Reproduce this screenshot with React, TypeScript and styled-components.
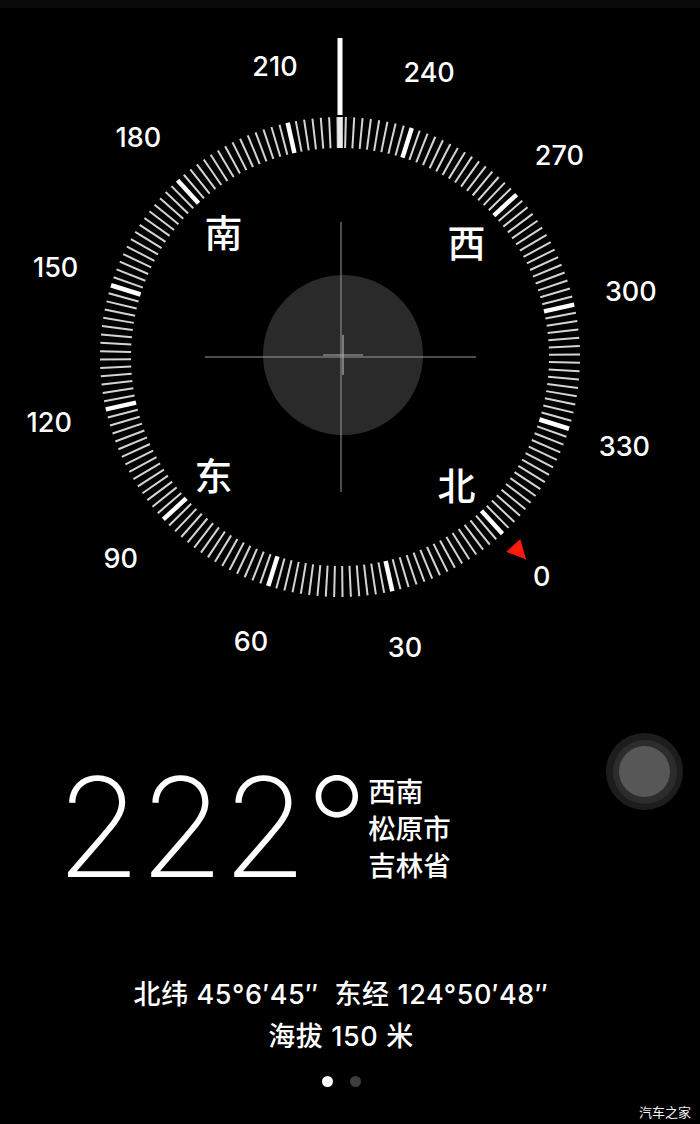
import React from 'react';
import styled, { createGlobalStyle } from 'styled-components';

const GlobalStyle = createGlobalStyle`
  html, body {
    margin: 0;
    padding: 0;
    background: #000;
  }
  * {
    box-sizing: border-box;
  }
`;

const CX = 340;
const CY = 357;
const HEADING = 222.6;

const Screen = styled.div`
  position: relative;
  width: 700px;
  height: 1124px;
  overflow: hidden;
  background: #000;
  color: #fff;
  display: flex;
  flex-direction: column;
  font-family: Inter, 'Noto Sans CJK SC', sans-serif;
`;

const TopStrip = styled.div`
  height: 8px;
  background: #090909;
`;

const DialSvg = styled.svg`
  display: block;
  width: 700px;
  height: 680px;
`;

const DialNumber = styled.text`
  font-family: Inter, 'Noto Sans CJK SC', sans-serif;
  font-size: 27px;
  font-weight: 500;
  fill: #fff;
  text-anchor: middle;
  dominant-baseline: central;
`;

const Cardinal = styled.text`
  font-family: 'Noto Sans CJK SC', sans-serif;
  font-size: 38px;
  font-weight: 500;
  fill: #fff;
  text-anchor: middle;
  dominant-baseline: central;
`;

const ReadingRow = styled.div`
  display: flex;
  align-items: flex-start;
  margin-top: 70px;
  padding-left: 56px;
`;

const Degrees = styled.div`
  font-family: Inter, sans-serif;
  font-size: 138px;
  font-weight: 200;
  line-height: 138px;
  letter-spacing: -2px;
`;

const Place = styled.div`
  display: flex;
  flex-direction: column;
  margin-left: 2px;
  margin-top: 14px;
  font-family: 'Noto Sans CJK SC', sans-serif;
  font-size: 27.5px;
  font-weight: 500;
  line-height: 37px;
`;

const Coords = styled.div`
  margin-top: 78px;
  display: flex;
  flex-direction: column;
  align-items: center;
  font-family: Inter, 'Noto Sans CJK SC', sans-serif;
  font-size: 27px;
  font-weight: 500;
  line-height: 42px;
  letter-spacing: 0.6px;
  padding-right: 18px;
`;

const Pager = styled.div`
  display: flex;
  justify-content: center;
  gap: 17px;
  margin-top: 18px;
  padding-right: 18px;
`;

const Dot = styled.span<{ $active?: boolean }>`
  width: 11px;
  height: 11px;
  border-radius: 50%;
  background: ${(p) => (p.$active ? '#fff' : '#3d3d3d')};
`;

const TouchButton = styled.div`
  position: absolute;
  left: 606px;
  top: 733px;
  width: 77px;
  height: 77px;
  border-radius: 50%;
  background: #1d1d1d;
  display: flex;
  align-items: center;
  justify-content: center;
`;

const TouchRing = styled.div`
  width: 64px;
  height: 64px;
  border-radius: 50%;
  background: #2c2c2c;
  display: flex;
  align-items: center;
  justify-content: center;
`;

const TouchCore = styled.div`
  width: 51px;
  height: 51px;
  border-radius: 50%;
  background: #575757;
`;

const Watermark = styled.div`
  position: absolute;
  right: 9px;
  bottom: 3px;
  font-family: 'Noto Sans CJK SC', sans-serif;
  font-size: 13px;
  color: #f2f2f2;
`;

function polar(r: number, deg: number) {
  const a = ((deg - HEADING) * Math.PI) / 180;
  return [CX + r * Math.sin(a), CY - r * Math.cos(a)];
}

const ticks = Array.from({ length: 180 }, (_, i) => i * 2);
const labels = [0, 30, 60, 90, 120, 150, 180, 210, 240, 270, 300, 330];
const cardinals = [
  { deg: 0, name: '北' },
  { deg: 90, name: '东' },
  { deg: 180, name: '南' },
  { deg: 270, name: '西' },
];

function northMarker() {
  const a = ((0 - HEADING) * Math.PI) / 180;
  const ux = Math.sin(a);
  const uy = -Math.cos(a);
  const px = -uy;
  const py = ux;
  const bx = CX + 256 * ux;
  const by = CY + 256 * uy;
  const tx = CX + 275 * ux;
  const ty = CY + 275 * uy;
  const w = 9.5;
  return `${bx + px * w},${by + py * w} ${bx - px * w},${by - py * w} ${tx},${ty}`;
}

function Dial() {
  return (
    <DialSvg viewBox="0 8 700 680">
      {ticks.map((d) => {
        const major = d % 30 === 0;
        const [x1, y1] = polar(209, d);
        const [x2, y2] = polar(240, d);
        return (
          <line
            key={d}
            x1={x1}
            y1={y1}
            x2={x2}
            y2={y2}
            stroke={major ? '#fff' : '#d4d4d4'}
            strokeWidth={major ? 4.5 : 2}
          />
        );
      })}
      <rect x={337.5} y={38} width={5} height={77} fill="#fff" />
      <rect x={337.8} y={117} width={5} height={31} fill="#ececec" />
      {labels.map((d) => {
        const [x, y] = polar(298, d);
        return (
          <DialNumber key={d} x={x} y={y}>
            {d}
          </DialNumber>
        );
      })}
      {cardinals.map((c) => {
        const [x, y] = polar(172, c.deg);
        return (
          <Cardinal key={c.name} x={x} y={y}>
            {c.name}
          </Cardinal>
        );
      })}
      <polygon points={northMarker()} fill="#ff1a0f" />
      <circle cx={343} cy={355} r={80} fill="#2a2a2a" />
      <line x1={341} y1={222} x2={341} y2={492} stroke="#9a9a9a" strokeWidth={1} />
      <line x1={205} y1={357} x2={476} y2={357} stroke="#9a9a9a" strokeWidth={1} />
      <line x1={343} y1={335} x2={343} y2={375} stroke="#b0b0b0" strokeWidth={1.2} />
      <line x1={323} y1={355} x2={363} y2={355} stroke="#b0b0b0" strokeWidth={1.2} />
    </DialSvg>
  );
}

export default function App() {
  return (
    <Screen>
      <GlobalStyle />
      <TopStrip />
      <Dial />
      <ReadingRow>
        <Degrees>222°</Degrees>
        <Place>
          <span>西南</span>
          <span>松原市</span>
          <span>吉林省</span>
        </Place>
      </ReadingRow>
      <Coords>
        <span>北纬 45°6′45″&nbsp;&nbsp;东经 124°50′48″</span>
        <span>海拔 150 米</span>
      </Coords>
      <Pager>
        <Dot $active />
        <Dot />
      </Pager>
      <TouchButton>
        <TouchRing>
          <TouchCore />
        </TouchRing>
      </TouchButton>
      <Watermark>汽车之家</Watermark>
    </Screen>
  );
}
